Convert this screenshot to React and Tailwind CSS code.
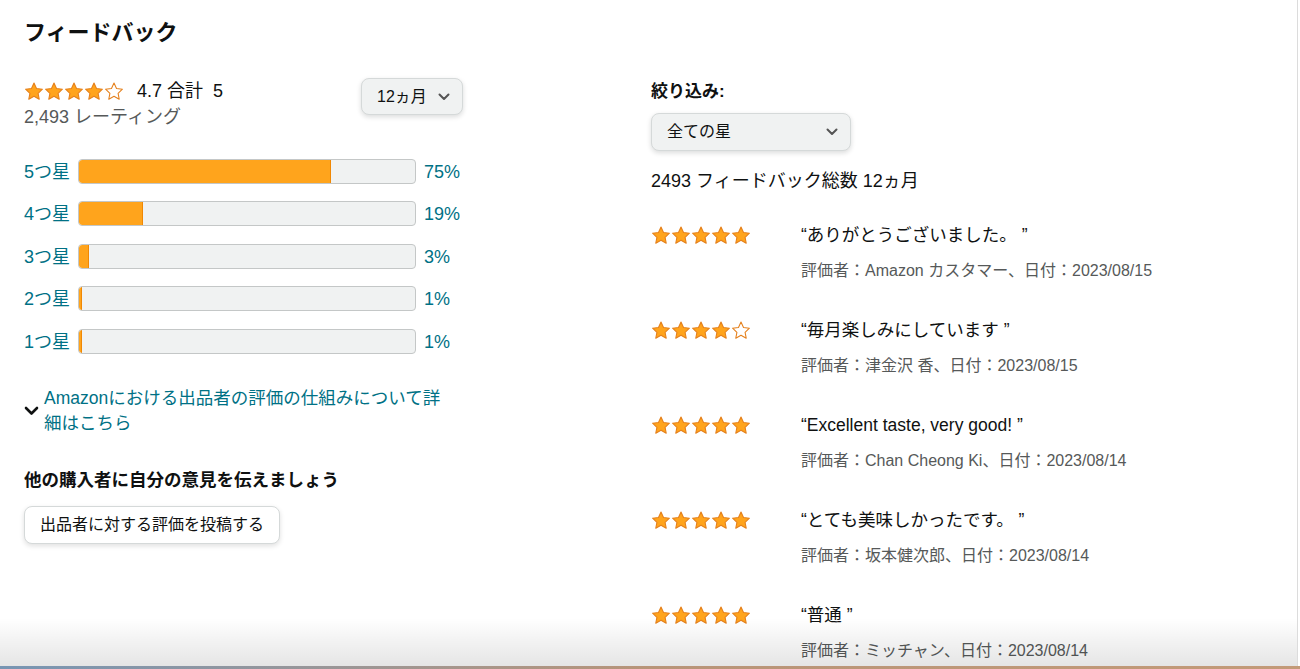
import React from "react";

const FONT = { fontFamily: '"Liberation Sans", "Noto Sans CJK JP", sans-serif' };

function Star({ filled = true }) {
  return (
    <svg width="20" height="19" viewBox="0 0 24 23" className="block">
      <path
        d="M12 1.3l3.05 6.5 7.15.95-5.25 4.95 1.35 7.1L12 17.35 5.7 20.8l1.35-7.1L1.8 8.75l7.15-.95z"
        fill={filled ? "#FFA41C" : "#ffffff"}
        stroke="#E5801C"
        strokeWidth="1.3"
        strokeLinejoin="round"
      />
    </svg>
  );
}

function Stars({ n }) {
  return (
    <div className="flex">
      {[0, 1, 2, 3, 4].map((i) => (
        <Star key={i} filled={i < n} />
      ))}
    </div>
  );
}

function Chevron({ className = "" }) {
  return (
    <svg width="12" height="8" viewBox="0 0 12 8" className={className}>
      <path d="M1.5 1.5L6 6l4.5-4.5" fill="none" stroke="#555" strokeWidth="2" strokeLinecap="round" strokeLinejoin="round" />
    </svg>
  );
}

const bars = [
  { label: "5つ星", pct: 75 },
  { label: "4つ星", pct: 19 },
  { label: "3つ星", pct: 3 },
  { label: "2つ星", pct: 1 },
  { label: "1つ星", pct: 1 },
];

const reviews = [
  { n: 5, text: "ありがとうございました。", meta: "評価者：Amazon カスタマー、日付：2023/08/15" },
  { n: 4, text: "毎月楽しみにしています", meta: "評価者：津金沢 香、日付：2023/08/15" },
  { n: 5, text: "Excellent taste, very good!", meta: "評価者：Chan Cheong Ki、日付：2023/08/14" },
  { n: 5, text: "とても美味しかったです。", meta: "評価者：坂本健次郎、日付：2023/08/14" },
  { n: 5, text: "普通", meta: "評価者：ミッチャン、日付：2023/08/14" },
];

export default function App() {
  return (
    <div className="w-[1300px] h-[669px] flex flex-col bg-white text-[#0F1111] overflow-hidden" style={FONT}>
      <div className="flex flex-1 min-h-0">
        <div className="relative w-[1298px] border-r border-[#dcdcdc] overflow-hidden">
          <div className="pl-[24px]">
            <h2 className="pt-[18px] text-[22px] leading-[30px] font-bold">フィードバック</h2>
            <div className="flex mt-[29px]">
              {/* left column */}
              <div className="w-[439px] flex flex-col">
                <div className="flex justify-between">
                  <div className="pt-[1px]">
                    <div className="flex items-center h-[26px] text-[18px]">
                      <Stars n={4} />
                      <span className="ml-[13px]">4.7 合計&nbsp;&nbsp;5</span>
                    </div>
                    <div className="h-[26px] leading-[26px] text-[18px] text-[#565959]">2,493 レーティング</div>
                  </div>
                  <button className="mt-[1px] h-[37px] w-[102px] flex items-center pl-[15px] pr-[12px] justify-between bg-[#F0F2F2] border border-[#D5D9D9] rounded-[8px] shadow-[0_2px_5px_rgba(15,17,17,0.15)] text-[16px]">
                    <span>12ヵ月</span>
                    <Chevron />
                  </button>
                </div>

                <div className="mt-[20px] flex flex-col">
                  {bars.map((b) => (
                    <div key={b.label} className="h-[42.5px] flex items-center text-[18px] text-[#007185]">
                      <span className="w-[54px] whitespace-nowrap pt-[2px]">{b.label}</span>
                      <div className="relative w-[338px] h-[25px] rounded-[4px] border border-[#C4C7C7] bg-[#F0F2F2] overflow-hidden">
                        <div
                          className="h-full bg-[#FFA41C] border-r border-[#F08804] rounded-l-[3px]"
                          style={{ width: `${b.pct}%` }}
                        />
                      </div>
                      <span className="ml-[8px] pt-[2px]">{b.pct}%</span>
                    </div>
                  ))}
                </div>

                <div className="mt-[23px] flex items-center">
                  <svg width="15" height="10" viewBox="0 0 15 10" className="mr-[5px] shrink-0">
                    <path d="M2 2l5.5 5.5L13 2" fill="none" stroke="#0F1111" strokeWidth="2.6" strokeLinecap="round" strokeLinejoin="round" />
                  </svg>
                  <div className="text-[17.5px] leading-[25px] text-[#007185] whitespace-nowrap">
                    Amazonにおける出品者の評価の仕組みについて詳
                    <br />
                    細はこちら
                  </div>
                </div>

                <div className="mt-[31px] text-[17.5px] leading-[26px] font-bold">他の購入者に自分の意見を伝えましょう</div>
                <button className="mt-[13px] self-start h-[38px] px-[15px] bg-white border border-[#D5D9D9] rounded-[8px] shadow-[0_2px_5px_rgba(15,17,17,0.13)] text-[16px]">
                  出品者に対する評価を投稿する
                </button>
              </div>

              {/* right column */}
              <div className="ml-[188px] flex flex-col">
                <div className="pt-[2px] h-[26px] leading-[26px] text-[17px] font-bold">絞り込み:</div>
                <button className="mt-[10px] w-[200px] h-[38px] flex items-center justify-between pl-[15px] pr-[12px] bg-[#F0F2F2] border border-[#D5D9D9] rounded-[8px] shadow-[0_2px_5px_rgba(15,17,17,0.15)] text-[16px]">
                  <span>全ての星</span>
                  <Chevron />
                </button>
                <div className="mt-[17px] h-[26px] leading-[26px] text-[18px]">2493 フィードバック総数 12ヵ月</div>

                <div className="mt-[28px] flex flex-col gap-[35px]">
                  {reviews.map((r, i) => (
                    <div key={i} className="flex">
                      <div className="w-[150px] pt-[4px]">
                        <Stars n={r.n} />
                      </div>
                      <div>
                        <div className="h-[26px] leading-[26px] text-[17.5px] whitespace-nowrap">
                          “{r.text} ”
                        </div>
                        <div className="mt-[12px] h-[22px] leading-[22px] text-[16px] text-[#565959] whitespace-nowrap">
                          {r.meta}
                        </div>
                      </div>
                    </div>
                  ))}
                </div>
              </div>
            </div>
          </div>
          <div className="pointer-events-none absolute left-0 right-0 bottom-0 h-[48px] bg-gradient-to-b from-[rgba(0,0,0,0)] to-[rgba(0,0,0,0.10)]" />
        </div>
        <div className="flex-1 bg-white" />
      </div>
      <div className="h-[3px] bg-gradient-to-r from-[#7795B3] via-[#B89478] to-[#C39A78]" />
    </div>
  );
}
